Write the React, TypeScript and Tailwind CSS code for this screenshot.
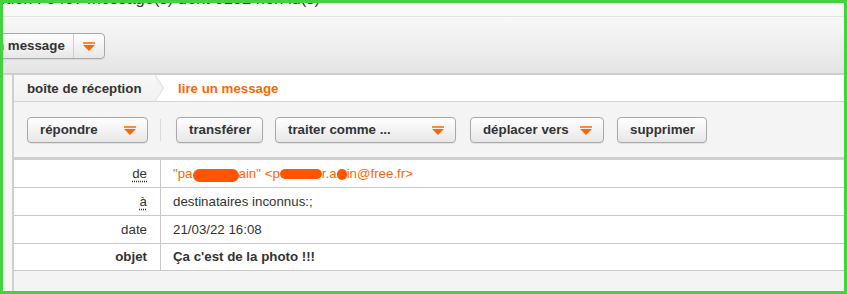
import React from "react";

function Arrow() {
  return (
    <svg width="12" height="9" viewBox="0 0 12 9" className="shrink-0">
      <rect x="0" y="0" width="12" height="2" fill="#ff8a33" />
      <polygon points="0,3 12,3 6,9" fill="#ff6600" />
    </svg>
  );
}

function Btn({ label, w, arrow }: { label: string; w: string; arrow?: boolean }) {
  return (
    <div
      className={`${w} h-[26px] flex items-center pl-[12px] pr-[11px] rounded-[4px] border border-[#a9a9a9] bg-gradient-to-b from-white to-[#e7e7e7] shadow-[0_1px_1px_rgba(0,0,0,0.08)] font-bold text-[#333] whitespace-nowrap`}
    >
      <span>{label}</span>
      {arrow && (
        <span className="ml-auto flex items-center">
          <Arrow />
        </span>
      )}
    </div>
  );
}

function Blob({ w, h = 11, mt = 0 }: { w: number; h?: number; mt?: number }) {
  return (
    <span
      className="inline-block bg-[#ff5500] rounded-full align-middle"
      style={{ width: w, height: h, marginTop: mt }}
    />
  );
}

export default function App() {
  return (
    <div className="w-[847px] h-[294px] border-[3px] border-[#43d33f] overflow-hidden bg-white flex flex-col font-['Liberation_Sans',Arial,sans-serif] text-[13.3px] text-[#333]">
      {/* top strip */}
      <div className="h-[14px] shrink-0 bg-[#f9f9f9] border-b border-[#e3e3e3] overflow-hidden">
        <div className="-mt-[14px] flex whitespace-nowrap text-[16.5px] leading-[19px] text-[#3a3a3a]">
          <div className="w-[80px] flex justify-end overflow-hidden">
            <span>réception : 3407</span>
          </div>
          <span className="ml-[4px]">message(s) dont 0202 non lu(s)</span>
        </div>
      </div>

      {/* main toolbar */}
      <div className="h-[58px] shrink-0 bg-gradient-to-b from-[#f8f8f8] to-[#e5e5e5] border-b-2 border-[#cdcdcd] flex items-center pt-[2px]">
        <div className="-ml-[68px] h-[26px] flex items-stretch rounded-[4px] border border-[#a9a9a9] bg-gradient-to-b from-white to-[#e7e7e7] shadow-[0_1px_1px_rgba(0,0,0,0.08)] font-bold text-[#333] whitespace-nowrap">
          <div className="flex items-center pl-[12px] pr-[8px]">écrire un message</div>
          <div className="w-px bg-[#cfcfcf]" />
          <div className="w-[30px] flex items-center justify-center">
            <Arrow />
          </div>
        </div>
      </div>

      {/* body */}
      <div className="flex flex-1 min-h-0">
        <div className="w-[11px] shrink-0 bg-[#f7f7f7] border-r-2 border-[#cfcfcf]" />
        <div className="flex-1 flex flex-col min-w-0">
          {/* breadcrumb */}
          <div className="h-[27px] shrink-0 flex items-stretch border-b border-[#d4d4d4] bg-white">
            <div className="flex items-center pt-px pl-[13px] pr-[10px] w-[141px] bg-gradient-to-b from-[#f8f8f8] to-[#f1f1f1] font-bold text-[#333] whitespace-nowrap">
              boîte de réception
            </div>
            <svg width="10" height="26" viewBox="0 0 10 26" className="shrink-0">
              <polygon points="0,0 8,13 0,26" fill="#f4f4f4" />
              <polyline points="0,0 8.5,13 0,26" fill="none" stroke="#dcdcdc" strokeWidth="1" />
            </svg>
            <div className="flex items-center pt-px pl-[13px] font-bold text-[#ff6600]">lire un message</div>
          </div>

          {/* action bar */}
          <div className="h-[58px] shrink-0 bg-[#f4f4f4] border-b-[3px] border-[#cfcfcf] flex items-center pt-px pl-[13px]">
            <Btn label="répondre" w="w-[121px]" arrow />
            <div className="w-px h-[22px] bg-[#dadada] ml-[12px] mr-[15px]" />
            <Btn label="transférer" w="w-[87px]" />
            <div className="w-[12px]" />
            <Btn label="traiter comme ..." w="w-[181px]" arrow />
            <div className="w-[14px]" />
            <Btn label="déplacer vers" w="w-[134px]" arrow />
            <div className="w-[13px]" />
            <Btn label="supprimer" w="w-[90px]" />
          </div>

          {/* header table */}
          <div className="shrink-0 bg-white">
            <div className="h-[28px] flex border-b border-[#c8c8c8]">
              <div className="w-[147px] shrink-0 border-r border-[#c8c8c8] flex items-center justify-end pr-[13px]">
                <span className="underline decoration-dotted underline-offset-[3px]">de</span>
              </div>
              <div className="flex items-center pl-[12px] text-[#ff6600] whitespace-nowrap">
                <span>"pa</span>
                <Blob w={46} h={13} mt={4} />
                <span>ain" &lt;p</span>
                <Blob w={42} h={10} />
                <span>r.a</span>
                <Blob w={10} h={11} mt={2} />
                <span>in@free.fr&gt;</span>
              </div>
            </div>
            <div className="h-[28px] flex border-b border-[#c8c8c8]">
              <div className="w-[147px] shrink-0 border-r border-[#c8c8c8] flex items-center justify-end pr-[13px]">
                <span className="underline decoration-dotted underline-offset-[3px]">à</span>
              </div>
              <div className="flex items-center pl-[12px]">destinataires inconnus:;</div>
            </div>
            <div className="h-[28px] flex border-b border-[#c8c8c8]">
              <div className="w-[147px] shrink-0 border-r border-[#c8c8c8] flex items-center justify-end pr-[13px]">
                date
              </div>
              <div className="flex items-center pl-[12px]">21/03/22 16:08</div>
            </div>
            <div className="h-[27px] flex border-b border-[#c8c8c8]">
              <div className="w-[147px] shrink-0 border-r border-[#c8c8c8] flex items-center justify-end pr-[13px] font-bold">
                objet
              </div>
              <div className="flex items-center pl-[12px] font-bold">Ça c'est de la photo !!!</div>
            </div>
          </div>

          <div className="flex-1 bg-[#f4f4f4]" />
        </div>
      </div>
    </div>
  );
}
